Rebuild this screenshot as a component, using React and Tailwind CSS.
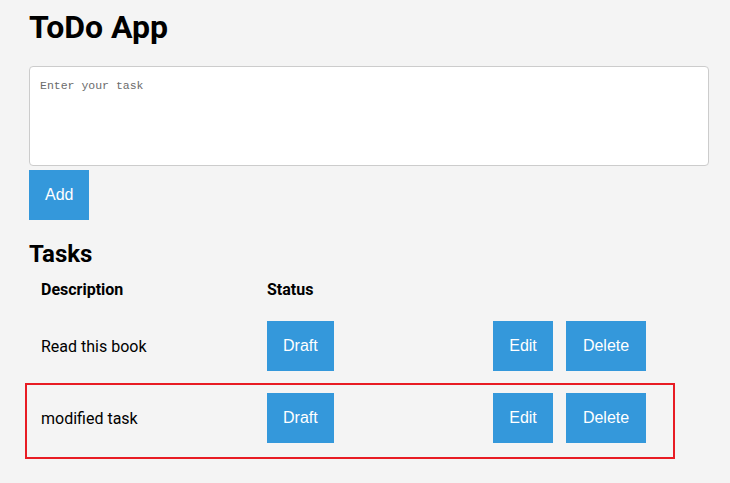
import React, { useState } from "react";

const btn =
    "h-[50px] px-4 pb-px bg-[#3498db] text-white text-[16px] font-['Liberation_Sans',Arial,sans-serif]";

const App = () => {
    const [tasks] = useState([
        { id: 1, description: "Read this book", status: "Draft" },
        { id: 2, description: "modified task", status: "Draft" },
    ]);
    const [text, setText] = useState("");

    return (
        <div className="relative min-h-[483px] bg-[#f4f4f4] px-[29px] pt-[8px] font-['Roboto',sans-serif] text-black">
            <h1 className="text-[32px] leading-[38px] font-bold">ToDo App</h1>

            {/* Input tugas */}
            <textarea
                value={text}
                onChange={(e) => setText(e.target.value)}
                placeholder="Enter your task"
                className="block mt-[20px] w-[680px] h-[100px] p-[10px] bg-white border border-[#cccccc] rounded-[4px] resize-none text-[11.5px] font-['Liberation_Mono',monospace] placeholder:text-[#6b6b6b]"
            />
            <button className={`${btn} mt-[4px] block`}>Add</button>

            <h2 className="mt-[20px] text-[24px] leading-[28px] font-bold">Tasks</h2>

            <table className="w-[680px] border-separate border-spacing-[2px] text-[16px] leading-[19px]">
                <thead>
                    <tr>
                        <th className="p-[10px] text-left font-bold">Description</th>
                        <th className="p-[10px] text-left font-bold">Status</th>
                        <th className="p-[10px]"></th>
                    </tr>
                </thead>
                <tbody>
                    {tasks.map((task) => (
                        <tr key={task.id}>
                            <td className="p-[10px] w-[224px]">{task.description}</td>
                            <td className="p-[10px] w-[224px]">
                                <button className={btn}>{task.status}</button>
                            </td>
                            <td className="p-[10px] w-[224px]">
                                <div className="flex gap-[13px]">
                                    <button className={`${btn} w-[60px]`}>Edit</button>
                                    <button className={`${btn} w-[80px]`}>Delete</button>
                                </div>
                            </td>
                        </tr>
                    ))}
                </tbody>
            </table>

            {/* Kotak sorotan merah */}
            <div className="absolute left-[25px] top-[383px] w-[650px] h-[76px] border-2 border-[#e81c24] pointer-events-none" />
        </div>
    );
};

export default App;
